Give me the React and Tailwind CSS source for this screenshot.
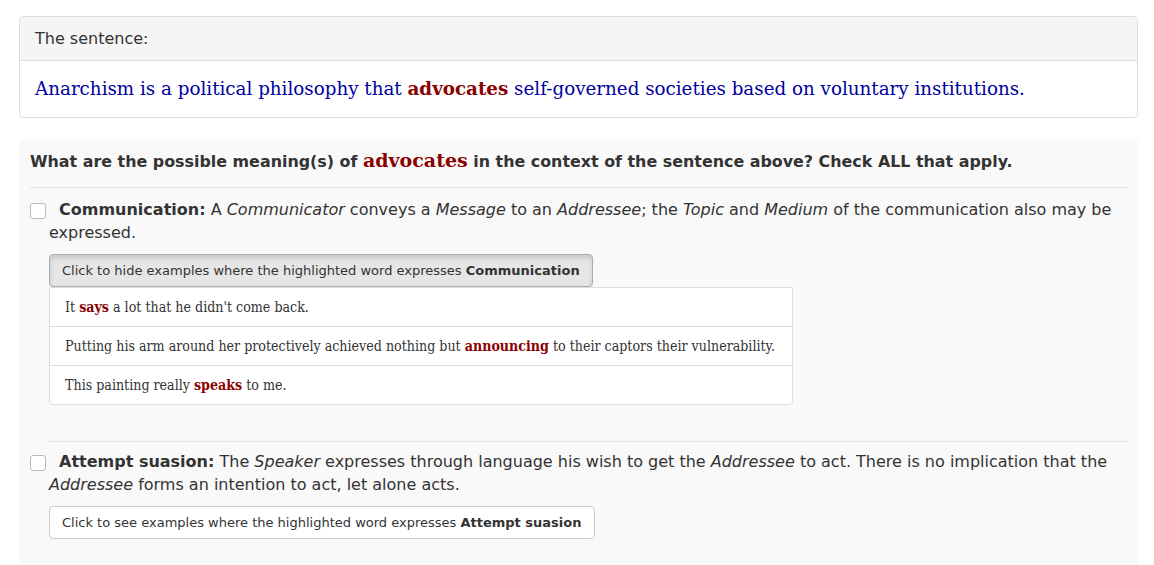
import React, { useState } from 'react';

const sans = { fontFamily: '"DejaVu Sans", Verdana, sans-serif' };
const serif = { fontFamily: '"DejaVu Serif", Georgia, serif' };
const condSerif = { fontFamily: '"DejaVu Serif Condensed", "DejaVu Serif", serif', fontStretch: 'condensed' };

const Hl = ({ children }) => <b className="text-[#8b0000]">{children}</b>;

const Sense = ({ name, children, examples, open, onToggle, top }) => (
    <div className={top}>
        <div className="relative pl-[19px] text-[16px] leading-[23px] text-[#333]">
            <input type="checkbox" className="absolute left-0 top-[5px] appearance-none w-4 h-4 border border-[#bbb] rounded-[3px] bg-white" />
            <div className="indent-[10px]">
                <b>{name}:</b> {children}
            </div>
        </div>
        <div className="ml-[19px] mt-[10px]">
            <button
                onClick={onToggle}
                className={`h-[33px] px-3 text-[13px] text-[#333] border rounded-[4px] ${open ? 'bg-[#e6e6e6] border-[#adadad] shadow-[inset_0_3px_5px_rgba(0,0,0,0.125)]' : 'bg-white border-[#ccc]'}`}
            >
                Click to {open ? 'hide' : 'see'} examples where the highlighted word expresses <b>{name}</b>
            </button>
            {open && (
                <ul className="w-[744px] border border-[#ddd] rounded-b-[4px] bg-white text-[14.1px] text-[#333]" style={condSerif}>
                    {examples.map((ex, i) => (
                        <li key={i} className={`leading-[38px] px-[15px] whitespace-nowrap ${i > 0 ? 'border-t border-[#ddd]' : ''}`}>{ex}</li>
                    ))}
                </ul>
            )}
        </div>
    </div>
);

export default function App() {
    const [open, setOpen] = useState({ comm: true, att: false });

    return (
        <div className="bg-white min-h-[565px] pl-[19px] pr-[16px] pt-4 overflow-hidden" style={sans}>
            <div className="border border-[#ddd] rounded-[4px] overflow-hidden">
                <div className="h-[44px] bg-[#f5f5f5] border-b border-[#ddd] px-[15px] flex items-center text-[16px] text-[#333]">The sentence:</div>
                <div className="h-[56px] px-[15px] flex items-center text-[18.3px] text-[#0000a0]" style={serif}>
                    <span>Anarchism is a political philosophy that <Hl>advocates</Hl> self-governed societies based on voluntary institutions.</span>
                </div>
            </div>

            <div className="mt-[21px] bg-[#f9f9f9] rounded-[4px] pl-[11px] pr-[9px] pt-[10px] pb-8">
                <div className="text-[15.9px] leading-[22px] font-bold text-[#333] pb-[14px] border-b border-[#e3e3e3]">
                    What are the possible meaning(s) of <span className="text-[19px] text-[#8b0000]" style={serif}>advocates</span> in the context of the sentence above? Check ALL that apply.
                </div>

                <Sense
                    name="Communication"
                    top="pt-[10px]"
                    open={open.comm}
                    onToggle={() => setOpen({ ...open, comm: !open.comm })}
                    examples={[
                        <>It <Hl>says</Hl> a lot that he didn't come back.</>,
                        <>Putting his arm around her protectively achieved nothing but <Hl>announcing</Hl> to their captors their vulnerability.</>,
                        <>This painting really <Hl>speaks</Hl> to me.</>,
                    ]}
                >
                    A <i>Communicator</i> conveys a <i>Message</i> to an <i>Addressee</i>; the <i>Topic</i> and <i>Medium</i> of the communication also may be expressed.
                </Sense>

                <div className="ml-[19px] mt-[36px] border-t border-[#e3e3e3]" />

                <Sense
                    name="Attempt suasion"
                    top="pt-[8px]"
                    open={open.att}
                    onToggle={() => setOpen({ ...open, att: !open.att })}
                    examples={[]}
                >
                    The <i>Speaker</i> expresses through language his wish to get the <i>Addressee</i> to act. There is no implication that the <i>Addressee</i> forms an intention to act, let alone acts.
                </Sense>
            </div>
        </div>
    );
}
